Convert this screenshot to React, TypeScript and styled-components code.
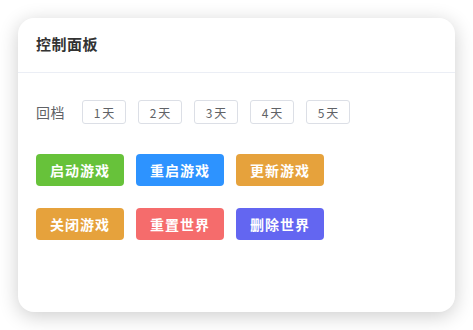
import styled, { createGlobalStyle } from 'styled-components';

const GlobalStyle = createGlobalStyle`
    html, body {
        margin: 0;
        padding: 0;
        background: #ffffff;
        font-family: 'Noto Sans CJK SC', 'Noto Sans', sans-serif;
    }
`;

const Page = styled.div`
    padding: 18px;
    box-sizing: border-box;
`;

const Card = styled.div`
    width: 437px;
    height: 294px;
    box-sizing: border-box;
    background: #ffffff;
    border-radius: 16px;
    box-shadow: 0 4px 20px rgba(0, 0, 0, 0.2);
    overflow: hidden;
`;

const Header = styled.div`
    height: 55px;
    box-sizing: border-box;
    padding: 0 18px 4px;
    display: flex;
    align-items: center;
    border-bottom: 1px solid #ebeef5;
    font-size: 15px;
    font-weight: 600;
    letter-spacing: 0.5px;
    color: #333333;
`;

const Body = styled.div`
    padding: 27px 18px;
    display: flex;
    flex-direction: column;
`;

const RollbackRow = styled.div`
    display: flex;
    align-items: center;
    gap: 12px;
    margin-bottom: 30px;
`;

const Label = styled.span`
    font-size: 14px;
    color: #606266;
    margin-right: 5px;
    letter-spacing: 0.5px;
`;

const DayButton = styled.button`
    width: 44px;
    height: 24px;
    padding: 0;
    box-sizing: border-box;
    border: 1px solid #dcdfe6;
    border-radius: 3px;
    background: #ffffff;
    color: #606266;
    font-family: inherit;
    font-size: 12px;
    letter-spacing: 2px;
    text-indent: 2px;
    cursor: pointer;
`;

const ActionGrid = styled.div`
    display: grid;
    grid-template-columns: repeat(3, 88px);
    column-gap: 12px;
    row-gap: 22px;
`;

const ActionButton = styled.button<{ $color: string }>`
    height: 32px;
    padding: 0;
    border: none;
    border-radius: 4px;
    background: ${(props) => props.$color};
    color: #ffffff;
    font-family: inherit;
    font-size: 14px;
    font-weight: 600;
    letter-spacing: 1px;
    cursor: pointer;
`;

const days = ['1天', '2天', '3天', '4天', '5天'];

const actions = [
    { label: '启动游戏', color: '#67c23a' },
    { label: '重启游戏', color: '#2d93ff' },
    { label: '更新游戏', color: '#e6a23c' },
    { label: '关闭游戏', color: '#e6a23c' },
    { label: '重置世界', color: '#f56c6c' },
    { label: '删除世界', color: '#6366f1' },
];

export default function App() {
    return (
        <>
            <GlobalStyle />
            <Page>
                <Card>
                    <Header>控制面板</Header>
                    <Body>
                        <RollbackRow>
                            <Label>回档</Label>
                            {days.map((d) => (
                                <DayButton key={d}>{d}</DayButton>
                            ))}
                        </RollbackRow>
                        <ActionGrid>
                            {actions.map((a) => (
                                <ActionButton key={a.label} $color={a.color}>
                                    {a.label}
                                </ActionButton>
                            ))}
                        </ActionGrid>
                    </Body>
                </Card>
            </Page>
        </>
    );
}
